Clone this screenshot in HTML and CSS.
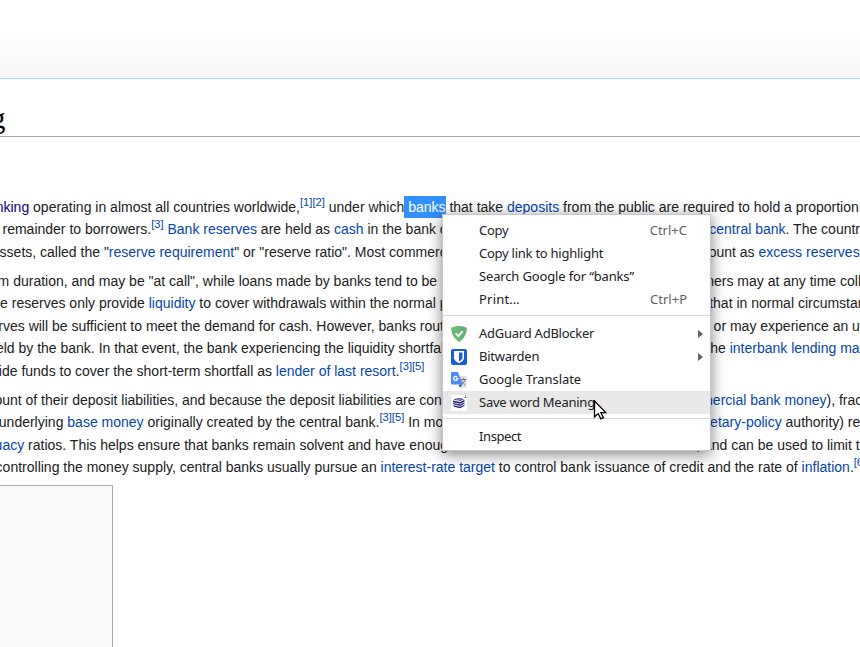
FILE: index.html
```html
<!DOCTYPE html>
<html lang="en">
<head>
<meta charset="utf-8">
<title>Fractional-reserve banking</title>
<link rel="stylesheet" href="styles.css">
</head>
<body>
<header class="page-head"></header>
<main class="content">
<h1 class="title"><span>g</span></h1>
<section class="article">
<div class="para">
<div class="line l1"><span class="full"><a class="visited">nking</a> operating in almost all countries worldwide,<sup>[1][2]</sup> under which<mark> banks</mark> that take <a>deposits</a> from the public are required to hold a proportion</span></div>
<div class="line l2"><span class="left">remainder to borrowers.<sup>[3]</sup> <a>Bank reserves</a> are held as <a>cash</a> in the bank or as</span><span class="right"><a>central bank</a>. The country's</span></div>
<div class="line l3"><span class="left">ssets, called the "<a>reserve requirement</a>" or "reserve ratio". Most commercial</span><span class="right">ount as <a>excess reserves</a></span></div>
</div>
<div class="para">
<div class="line l4"><span class="left">m duration, and may be "at call", while loans made by banks tend to be</span><span class="right">ners may at any time collect</span></div>
<div class="line l5"><span class="left">e reserves only provide <a>liquidity</a> to cover withdrawals within the normal p</span><span class="right">that in normal circumstances</span></div>
<div class="line l6"><span class="left">rves will be sufficient to meet the demand for cash. However, banks routinely</span><span class="right">or may experience an unusual</span></div>
<div class="line l7"><span class="left">eld by the bank. In that event, the bank experiencing the liquidity shortfall</span><span class="right">the <a>interbank lending market</a></span></div>
<div class="line l8"><span class="full">ide funds to cover the short-term shortfall as <a>lender of last resort</a>.<sup>[3][5]</sup></span></div>
</div>
<div class="para">
<div class="line l9"><span class="left">ount of their deposit liabilities, and because the deposit liabilities are cons</span><span class="right"><a>mercial bank money</a>), fractional</span></div>
<div class="line l10"><span class="left">underlying <a>base money</a> originally created by the central bank.<sup>[3][5]</sup> In most</span><span class="right"><a>etary-policy</a> authority) reserve</span></div>
<div class="line l11"><span class="left"><a>uacy</a> ratios. This helps ensure that banks remain solvent and have enough</span><span class="right">, and can be used to limit the</span></div>
<div class="line l12"><span class="full">controlling the money supply, central banks usually pursue an <a>interest-rate target</a> to control bank issuance of credit and the rate of <a>inflation</a>.<sup>[6]</sup></span></div>
</div>
</section>
<aside class="toc"></aside>
</main>
<nav class="menu">
<div class="item"><span class="label">Copy</span><kbd>Ctrl+C</kbd></div>
<div class="item"><span class="label">Copy link to highlight</span></div>
<div class="item"><span class="label soft">Search Google for “banks”</span></div>
<div class="item"><span class="label wide">Print…</span><kbd>Ctrl+P</kbd></div>
<hr>
<div class="item"><svg class="icon" viewBox="0 0 16 16"><path fill="#68bc71" d="M8 0C5.500 0 2.500.6.200 1.800c0 2.500 0 9 7.800 14.200z"/><path fill="#67b279" d="M8 0c2.500 0 5.500.6 7.800 1.800 0 2.500 0 9-7.800 14.200z"/><path fill="none" stroke="#fff" stroke-width="1.800" d="M4.600 7.300l2.800 2.800 4.200-5"/></svg><span class="label">AdGuard AdBlocker</span><i class="arrow"></i></div>
<div class="item"><svg class="icon" viewBox="0 0 16 16"><rect width="16" height="16" rx="2" fill="#175ddc"/><path fill="#fff" d="M3 2h10v6.500c0 3-3 4.800-5 5.700-2-.9-5-2.700-5-5.700z"/><path fill="#175ddc" d="M8 3.600h3.500v5c0 1.700-1.800 3-3.500 3.900z"/></svg><span class="label">Bitwarden</span><i class="arrow"></i></div>
<div class="item"><svg class="icon" viewBox="0 0 16 16"><path fill="#dce0e2" d="M7 4h8.500v11.500H9z"/><path stroke="#718087" fill="none" d="M9.500 7.500h6M12.500 6v1.500M14 7.500c-.4 2.500-2.500 4-4 5M10.500 8.500c1 2 2.500 3.500 4 4.500"/><path fill="#2358c5" d="M7.500 12.500h4L9 15.800z"/><path fill="#4b8bf5" d="M.8 0H7l4.500 12.500H.8Q0 12.500 0 11.700V.8Q0 0 .8 0z"/><path fill="none" stroke="#fff" stroke-width="1.200" d="M6.300 5A2.100 2.100 0 1 0 6.800 6.700H4.700"/></svg><span class="label faint">Google Translate</span></div>
<div class="item active"><svg class="icon" viewBox="0 0 16 16"><path fill="#fff" d="M0 0h16v16H0z"/><path fill="#26257a" d="M2.500 4.600L7.500 2.900l5.500 1-3.800 2.200zM2 5.400l7.300 1.500L13.500 4.700v1.700L9.300 8.800 2 7.200zM2.200 8l7.100 1.500 4.200-2.300v1.300l-4.200 2.400-7.100-1.600zM2.200 10.300l7.100 1.500 4.200-2.300v1.300l-4.200 2.400-6.300-1.400z"/><path stroke="#fff" stroke-width=".5" fill="none" d="M5 4.600l4 .7M6.500 3.900l4 .7"/><path stroke="#549357" stroke-width=".8" fill="none" d="M14.500 0v2.300M13.300 2.500h2.700"/></svg><span class="label">Save word Meaning</span></div>
<hr>
<div class="item"><span class="label tight">Inspect</span></div>
</nav>
<svg class="cursor" viewBox="0 0 14 22"><path fill="#fff" stroke="#000" stroke-width="1.300" d="M1.500 1v16l3.700-3.400 2.600 5.200 2.600-1.200-2.500-5h4.900z"/></svg>
</body>
</html>
```
FILE: styles.css
```css
* { box-sizing: border-box; }
body { margin: 0; width: 860px; height: 647px; overflow: hidden; background: #fff; color: #202122; font: 14px/22.4px "Liberation Sans", Arial, sans-serif; }
.page-head { height: 79px; border-bottom: 1px solid #a7d7f9; background: linear-gradient(#fff 28px, #f6f6f6 100%); }
.title { margin: 0; height: 58px; border-bottom: 1px solid #a2a9b1; padding-top: 21px; color: #000; font: 28.8px/36px "Liberation Serif", serif; }
.title span { display: block; margin-left: -9px; }
.article { padding-top: 58.800px; }
.para { margin-bottom: 7px; }
.line { display: flex; height: 22.4px; overflow: hidden; white-space: pre; text-indent: var(--start, 0); }
.left { flex: 0 0 700px; overflow: hidden; }
.right { flex: none; text-indent: var(--resume, 0); }
.l1 { --start: -4.300px; }
.l2 { --start: 2.500px; --resume: 9.300px; }
.l3 { --start: -.4px; --resume: 8.700px; }
.l4 { --start: -2.400px; --resume: 6.200px; }
.l5 { --start: .1px; --resume: 9.200px; }
.l6 { --start: -1.700px; --resume: 13.600px; }
.l7 { --start: -4.100px; --resume: 6.300px; }
.l8 { --start: -1.200px; }
.l9 { --start: -5.600px; --resume: 1.200px; }
.l10 { --start: -1.200px; --resume: 10.100px; }
.l11 { --start: -5.400px; --resume: -3.800px; }
.l12 { --start: -4.400px; }
a { color: #0645ad; }
a.visited { color: #0b0080; }
sup { color: #0645ad; font-size: 11.2px; line-height: 1; vertical-align: super; }
mark { padding: 3px 0; background: #3390ff; color: #fff; }
.toc { width: 113px; height: 180px; margin-top: 1px; border: solid #a2a9b1; border-width: 1px 1px 0 0; background: #f8f9fa; }
.menu { position: absolute; left: 442px; top: 214px; width: 269px; height: 237px; padding: 4px 0; border: 1px solid #c8c8c8; background: #fff; box-shadow: 0 3px 14px rgba(0, 0, 0, .5); color: #202124; font: 13px/23px "Noto Sans", sans-serif; }
.item { display: flex; align-items: center; height: 23px; padding: 0 7px 0 36px; }
.item.active { background: #e8e8e8; }
.icon { width: 16px; height: 16px; margin: 0 12px 0 -28px; }
.label { flex: 1; white-space: nowrap; letter-spacing: -.25px; }
.label.soft { letter-spacing: -.15px; }
.label.faint { letter-spacing: -.07px; }
.label.wide { letter-spacing: .2px; }
.label.tight { letter-spacing: -.4px; }
kbd { margin-right: 16px; color: #5f6368; font: inherit; }
.arrow { border: 4px solid transparent; border-left: 5px solid #5f6368; border-right: 0; }
hr { height: 1px; margin: 4px 0 6px; border: 0; background: #d8d8dc; }
.cursor { position: absolute; left: 593px; top: 400px; width: 14px; height: 22px; }
```
